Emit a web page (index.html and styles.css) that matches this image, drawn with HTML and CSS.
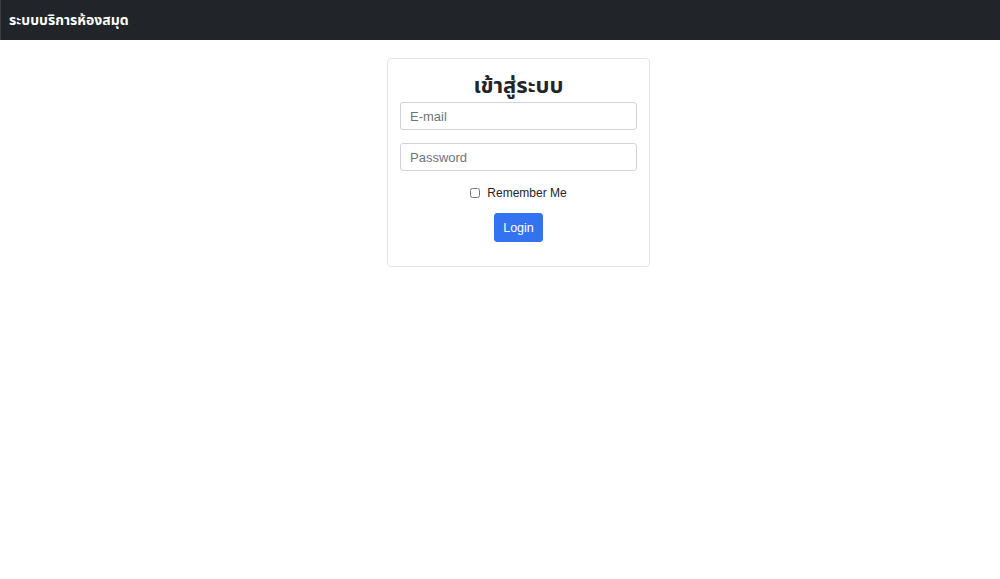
FILE: index.html
```html
<!DOCTYPE html>
<html lang="th">
<head>
<meta charset="utf-8">
<title>ระบบบริการห้องสมุด</title>
<link rel="stylesheet" href="styles.css">
</head>
<body>
<nav class="navbar">
  <span class="brand">ระบบบริการห้องสมุด</span>
</nav>
<main class="page">
  <div class="card">
    <h1 class="card-title">เข้าสู่ระบบ</h1>
    <input class="field" type="text" placeholder="E-mail">
    <input class="field" type="password" placeholder="Password">
    <label class="remember"><input type="checkbox" class="check"> Remember Me</label>
    <div class="actions"><button class="btn" type="button">Login</button></div>
  </div>
</main>
</body>
</html>
```
FILE: styles.css
```css
* { box-sizing: border-box; }
html, body { margin: 0; padding: 0; background: #fff; }
body {
  font-family: "Liberation Sans", "Noto Sans Thai", "Noto Sans", sans-serif;
  color: #212529;
}
.navbar {
  height: 40px;
  background: #212529;
  border-left: 1px solid #3b3e42;
  display: flex;
  align-items: center;
  padding-left: 8px;
}
.brand {
  color: #fff;
  font-size: 14px;
  font-weight: bold;
}
.page {
  display: flex;
  justify-content: center;
  padding: 18px 0 0 37px;
}
.card {
  width: 263px;
  border: 1px solid #e3e5e8;
  border-radius: 4px;
  padding: 11px 12px 24px;
  display: flex;
  flex-direction: column;
}
.card-title {
  margin: 0 0 1px;
  font-size: 22px;
  line-height: 31px;
  font-weight: bold;
  text-align: center;
}
.field {
  display: block;
  width: 100%;
  height: 28px;
  border: 1px solid #ced4da;
  border-radius: 3px;
  padding: 0 9px;
  font-family: inherit;
  font-size: 13px;
  color: #212529;
  margin-bottom: 13px;
}
.field::placeholder { color: #6c757d; }
.remember {
  display: flex;
  justify-content: center;
  align-items: center;
  gap: 7px;
  font-size: 12px;
  line-height: 18px;
  margin-top: 0;
}
.check {
  margin: 0;
  width: 10px;
  height: 10px;
}
.actions {
  display: flex;
  justify-content: center;
  margin-top: 11px;
}
.btn {
  height: 29px;
  padding: 0 8px;
  background: #3373f2;
  border: 1px solid #3373f2;
  border-radius: 3px;
  color: #fff;
  font-family: inherit;
  font-size: 12.5px;
}
```
